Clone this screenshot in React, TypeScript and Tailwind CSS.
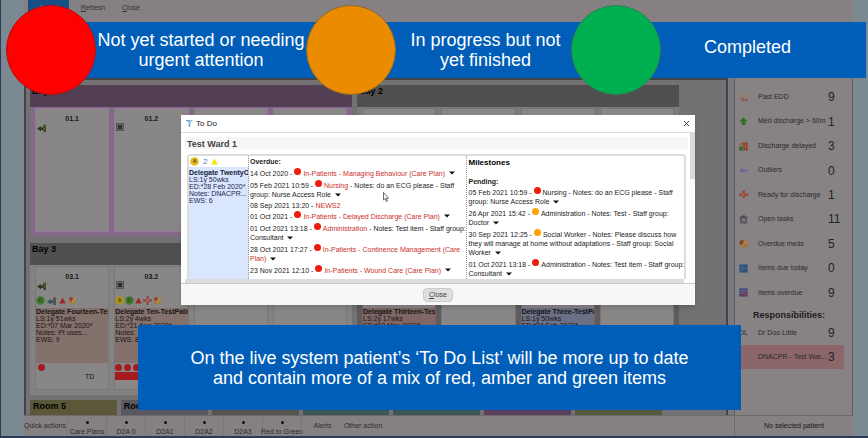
import type { ReactNode } from "react";

type Item = {
  date: string;
  dot?: "red" | "amber";
  link?: string;
  first?: string;
  rest?: string[];
  linkRest?: string;
  menu?: boolean;
};

const overdue: Item[] = [
  { date: "14 Oct 2020", dot: "red", link: "In-Patients - Managing Behaviour (Care Plan)", menu: true },
  { date: "05 Feb 2021 10:59", dot: "red", link: "Nursing", first: " - Notes: do an ECG please - Staff", rest: ["group: Nurse Access Role"], menu: true },
  { date: "08 Sep 2021 13:20", link: "NEWS2" },
  { date: "01 Oct 2021", dot: "red", link: "In-Patients - Delayed Discharge (Care Plan)", menu: true },
  { date: "01 Oct 2021 13:18", dot: "red", link: "Administration", first: " - Notes: Test item - Staff group:", rest: ["Consultant"], menu: true },
  { date: "28 Oct 2021 17:27", dot: "red", link: "In-Patients - Continence Management (Care", linkRest: "Plan)", menu: true },
  { date: "23 Nov 2021 12:10", dot: "red", link: "In-Patients - Wound Care (Care Plan)", menu: true },
];

const pending: Item[] = [
  { date: "05 Feb 2021 10:59", dot: "red", first: "Nursing - Notes: do an ECG please - Staff", rest: ["group: Nurse Access Role"], menu: true },
  { date: "26 Apr 2021 15:42", dot: "amber", first: "Administration - Notes: Test - Staff group:", rest: ["Doctor"], menu: true },
  { date: "30 Sep 2021 12:25", dot: "amber", first: "Social Worker - Notes: Please discuss how", rest: ["they will manage at home without adaptations - Staff group: Social", "Worker"], menu: true },
  { date: "01 Oct 2021 13:18", dot: "red", first: "Administration - Notes: Test item - Staff group:", rest: ["Consultant"], menu: true },
];

function Arrow() {
  return (
    <button aria-label="Item actions" className="ml-1 inline-block align-middle">
      <svg className="block h-1 w-[6px]" viewBox="0 0 6 4"><path d="M0 0.5h6L3 3.6z" fill="#111" /></svg>
    </button>
  );
}

function TodoItem({ item }: { item: Item }) {
  const tail = item.linkRest ? [item.linkRest] : item.rest ?? [];
  return (
    <li className="whitespace-nowrap">
      <div className={`flex items-center whitespace-pre ${item.dot ? "h-3" : "h-[10px]"}`}>
        <span>{item.date} - </span>
        {item.dot && (
          <span className={`mr-[2px] mb-[3px] size-[7px] shrink-0 rounded-full ${item.dot === "red" ? "bg-[#ee1c0c]" : "bg-[#fba504]"}`} />
        )}
        {item.link && <a href="#item" className="text-[#c9302c]">{item.link}</a>}
        {item.first && <span>{item.first}</span>}
        {item.menu && tail.length === 0 && <Arrow />}
      </div>
      {tail.map((t, i) => (
        <div key={t} className={`h-[9px] leading-[8px] ${item.linkRest ? "text-[#c9302c]" : ""}`}>
          {t}
          {item.menu && i === tail.length - 1 && <Arrow />}
        </div>
      ))}
    </li>
  );
}

function Person({ x = "#263d1c" }: { x?: string }) {
  return (
    <svg className="size-[10px]" viewBox="0 0 10 10">
      <path d="M0 5.5 4 3v1.5h2V2h3v7H7L6 7H4v1.5z" fill={x} />
      <circle cx="8" cy="2.5" r="1.5" fill="#52682e" />
      <path d="M6.5 4.5h2v3h-2z" fill="#6b5a35" />
    </svg>
  );
}

function Chip() {
  return (
    <svg className="size-2" viewBox="0 0 8 8">
      <rect x="0.5" y="0.5" width="7" height="7" fill="#666" stroke="#555" />
      <rect x="2" y="2" width="4" height="4" fill="#2f2f2f" />
    </svg>
  );
}

function Ring({ color, letter }: { color: string; letter: string }) {
  return (
    <svg className="size-[9px]" viewBox="0 0 9 9">
      <circle cx="4.5" cy="4.5" r="4.3" fill={color} />
      <text x="4.5" y="6.3" textAnchor="middle" fontSize="5" fontWeight="bold" fill="#3b3a12">{letter}</text>
    </svg>
  );
}

const Triangle = ({ color }: { color: string }) => (
  <svg className="size-[7px]" viewBox="0 0 7 7"><path d="M3.5 0.5 6.8 6.5H0.2z" fill={color} /></svg>
);

const Meds = () => (
  <svg className="size-[9px]" viewBox="0 0 9 9">
    <circle cx="4.5" cy="5" r="3.4" fill="#a8773f" />
    <circle cx="3" cy="3" r="2" fill="#8f4a2c" />
    <path d="M4.5 4.5 8 2M4 7l2-2" stroke="#c9a258" strokeWidth="1" />
  </svg>
);

const Cross = () => (
  <svg className="size-[9px]" viewBox="0 0 9 9">
    <path d="M3.5 0h2v3.5H9v2H5.5V9h-2V5.5H0v-2h3.5z" fill="#963c36" />
    <path d="M4.5 3v3M3 4.5h3" stroke="#b98a70" strokeWidth="0.6" />
  </svg>
);

type CardProps = { title: string; icon?: ReactNode; extra?: ReactNode; children?: ReactNode; tone?: string };

function Card({ title, icon, extra, children, tone = "border-[#777]" }: CardProps) {
  return (
    <article className={`flex min-w-0 flex-col overflow-hidden border bg-[#898688] text-[#161616] ${tone}`}>
      <h3 className="pt-[6px] text-center text-[7px] leading-[8px] font-bold">{title}</h3>
      <div className="flex h-3 items-start pl-px">{icon}</div>
      {extra}
      {children}
    </article>
  );
}

function Bay({ name, head, body, children }: { name: string; head: string; body: string; children: ReactNode }) {
  return (
    <section className={`flex h-[152px] flex-col ${body}`}>
      <h2 className={`h-[22px] shrink-0 pl-[2px] text-[9px] leading-[12px] font-bold text-black ${head}`}>{name}</h2>
      <div className="grid flex-1 grid-cols-4 gap-[5px] px-[5px] pt-px pb-[5px]">{children}</div>
    </section>
  );
}

function Patient({ name, lines, tone }: { name: string; lines: string[]; tone: string }) {
  return (
    <div className={`h-[55px] shrink-0 overflow-hidden whitespace-nowrap text-[7px] leading-[7px] ${tone}`}>
      <p className="font-bold">{name}</p>
      {lines.map((l) => <p key={l}>{l}</p>)}
    </div>
  );
}

const stats: { label: string; value: number; icon: ReactNode }[] = [
  { label: "Past EDD", value: 9, icon: <><circle cx="3" cy="3" r="2.3" fill="none" stroke="#a67a3f" strokeWidth="1" /><path d="M3 5.5 5 9M6 8h4" fill="none" stroke="#9c3a33" strokeWidth="1.3" /></> },
  { label: "Med discharge > 60m", value: 1, icon: <path d="M5 0.5 9.5 5H7v4H3V5H0.500z" fill="#2f6f22" /> },
  { label: "Discharge delayed", value: 3, icon: <><path d="M4 0.500h5.500v9H6z" fill="#95392b" /><circle cx="2.500" cy="2.500" r="1.500" fill="#8b6330" /><path d="M0 9.500V5h5v4.500z" fill="#3b6a30" /><path d="M7 2v5" stroke="#b07b3b" /></> },
  { label: "Outliers", value: 0, icon: <path d="M0.500 5 4 2v2h5.500v2H4v2z" fill="#65649a" /> },
  { label: "Ready for discharge", value: 1, icon: <><path d="M4 0.500h2.500V4H10v2.500H6.500V9H4V6.500H0V4h4z" fill="#984230" /><path d="M5.200 3.500v3.500M3.500 5.200h3.500" stroke="#b98655" strokeWidth="0.700" /></> },
  { label: "Open tasks", value: 11, icon: <><path d="M1 2.500h8v7H1z" fill="#5c5960" /><path d="M3 0.500h4v2H3zM0.500 2h9v1h-9z" fill="#46434a" /><path d="M3 4.500h4M3 6.500h4" stroke="#8d898f" /></> },
  { label: "Overdue meds", value: 5, icon: <><circle cx="5.500" cy="5.500" r="4" fill="#a5742e" /><circle cx="3" cy="4" r="2.500" fill="#7d3f25" /><path d="M4 5 8.500 3M3 8l3-2" stroke="#c39a4d" /></> },
  { label: "Items due today", value: 0, icon: <><path d="M0.500 0.500h9v9h-9z" fill="#29527a" /><path d="M2 3h6M2 5h6M2 7h3" stroke="#52748f" strokeWidth="0.800" /></> },
  { label: "Items overdue", value: 9, icon: <><path d="M0.500 0.500h9v9h-9z" fill="#3b4474" /><path d="M2 3h6M2 5.500h3" stroke="#8a8fae" strokeWidth="0.800" /><path d="M4.500 4.500h4v4h-4z" fill="#933a52" /></> },
];

const rooms = [
  { name: "Room 5", tone: "bg-[#5a5838]" },
  { name: "Room 6", tone: "bg-[#5a5860]" },
  { name: "Room 7", tone: "bg-[#575450]" },
  { name: "Room 8", tone: "bg-[#3c5558]" },
  { name: "Room 9", tone: "bg-[#3c5558]" },
  { name: "Room 10", tone: "bg-[#5c3f5c]" },
  { name: "Room 11", tone: "bg-[#55583c]" },
];

const actions = ["Care Plans", "D2A 0", "D2A1", "D2A2", "D2A3", "Red to Green"];

function Board() {
  return (
    <div className="min-w-0 flex-1 overflow-hidden border-x-2 border-t-2 border-[#454345] bg-[#747174] pt-[5px] pl-1">
      <div className="grid grid-cols-2 gap-x-[5px] gap-y-[6px] pr-[47px]">
        <Bay name="Bay 1" head="bg-[#523f54]" body="bg-[#826a86]">
          <Card tone="border-[#94769a]" title="01.1" icon={<Person />} />
          <Card tone="border-[#94769a]" title="01.2" icon={<Chip />} />
          <Card tone="border-[#94769a]" title="01.3" />
          <Card tone="border-[#94769a]" title="01.4" />
        </Bay>
        <Bay name="Bay 2" head="bg-[#505050]" body="bg-[#7c7a7c]">
          <Card title="02.1" /><Card title="02.2" /><Card title="02.3" /><Card title="02.4" />
        </Bay>
        <Bay name="Bay 3" head="bg-[#505050]" body="bg-[#858284]">
          <Card
            title="03.1"
            icon={<Person />}
            extra={<div className="flex h-[15px] shrink-0 items-center gap-[2px]"><Ring color="#3d7a2c" letter="G" /><Person x="#31505c" /><Triangle color="#a02823" /><Meds /></div>}
          >
            <Patient name="Delegate Fourteen-Test" lines={["LS:1y 51wks", "ED:*07 Mar 2020*", "Notes: Pt uses...", "EWS: 9"]} tone="bg-[#85716c]" />
            <span className="mt-px ml-[2px] size-[7px] shrink-0 rounded-full bg-[#a31b1f]" />
            <p className="pt-[2px] pr-[14px] text-right text-[7px] leading-[8px]">TD</p>
          </Card>
          <Card
            title="03.2"
            icon={<Chip />}
            extra={<div className="flex h-[15px] shrink-0 items-center gap-px"><Ring color="#a9921d" letter="A" /><Ring color="#3d7a2c" letter="G" /><Triangle color="#a02823" /><Cross /><Meds /></div>}
          >
            <Patient name="Delegate Ten-TestPatie" lines={["LS:2y 4wks", "ED:*21 Aug 2020*", "Notes: ...", "EWS: 8"]} tone="bg-[#85716c]" />
            <div className="mt-px flex shrink-0 gap-[2px]">
              {[0, 1, 2, 3].map((n) => <span key={n} className="size-[7px] rounded-full bg-[#a31b1f]" />)}
            </div>
            <div className="mt-px h-2 shrink-0 bg-[#a31b1f]" />
          </Card>
          <Card title="03.3" /><Card title="03.4" />
        </Bay>
        <Bay name="Bay 4" head="bg-[#505050]" body="bg-[#5e5c5e]">
          <Card title="04.1" tone="border-[#80615f]" extra={<div className="h-[15px] shrink-0" />}>
            <Patient name="Delegate Thirteen-Test" lines={["LS:2y 17wks", "ED:*02 May 2020*"]} tone="bg-[#806766]" />
          </Card>
          <Card title="04.2" />
          <Card title="04.3" tone="border-[#80615f]" extra={<div className="h-[15px] shrink-0" />}>
            <Patient name="Delegate Three-TestPa" lines={["LS:1y 50wks", "ED:*24 Feb 2020*"]} tone="bg-[#6b7085]" />
          </Card>
          <Card title="04.4" />
        </Bay>
      </div>
      <div className="mt-[5px] grid grid-cols-7 gap-1 pr-16">
        {rooms.map((r) => (
          <h2 key={r.name} className={`h-4 pl-[3px] text-[9px] leading-[12px] font-bold text-black ${r.tone}`}>{r.name}</h2>
        ))}
      </div>
    </div>
  );
}

function Sidebar() {
  return (
    <aside className="w-[119px] shrink-0 border-x border-[#5e5c5e] bg-[#878384] pt-[7px] text-[7px] text-[#2b292b]">
      <ul className="grid h-[220px] auto-rows-fr">
        {stats.map((s) => (
          <li key={s.label} className="flex">
            <button className="flex flex-1 items-center pl-1 text-left">
              <svg className="size-[9px]" viewBox="0 0 10 10">{s.icon}</svg>
              <span className="w-20 pl-[10px] whitespace-nowrap">{s.label}</span>
              <span className="text-[12px] text-[#222]">{s.value}</span>
            </button>
          </li>
        ))}
      </ul>
      <h2 className="pt-1 pl-[18px] text-[9px] leading-[12px] font-bold text-[#1d1b1d]">Responsibilities:</h2>
      <div className="flex h-6 items-center pl-1">
        <span className="w-[19px]">DL</span>
        <span className="w-[70px] whitespace-nowrap">Dr Doo Little</span>
        <span className="text-[12px] text-[#222]">9</span>
      </div>
      <div className="mr-2 ml-[5px] flex h-6 items-center bg-[#8c6669] pl-[18px]">
        <span className="w-[70px] whitespace-nowrap">DNACPR - Test War...</span>
        <span className="text-[12px] text-[#222]">3</span>
      </div>
    </aside>
  );
}

function Dialog() {
  return (
    <div role="dialog" aria-label="To Do" className="absolute top-[115px] right-[173px] left-[180px] flex h-[190px] flex-col bg-white text-[7px] leading-[9px] text-[#222] shadow-md">
      <header className="flex h-[18px] shrink-0 items-center border-b border-[#ddd] pr-[5px] pl-1">
        <svg className="size-[9px]" viewBox="0 0 9 9"><path d="M1 1h7L5.500 4v2L3.500 8.500V4z" fill="#9cc7ea" /><path d="M1 1.500h4M4.500 5v3" stroke="#4c93cf" strokeWidth="0.800" /></svg>
        <h1 className="flex-1 pl-[2px] text-[8px]">To Do</h1>
        <button aria-label="Close dialog">
          <svg className="size-[7px]" viewBox="0 0 7 7"><path d="m1 1 5 5M6 1 1 6" stroke="#333" strokeWidth="0.900" /></svg>
        </button>
      </header>
      <div className="flex min-h-0 flex-1 pl-1">
        <div className="flex min-w-0 flex-1 flex-col overflow-hidden pt-1">
          <h2 className="mb-[5px] h-3 shrink-0 bg-[#f6f6f6] pl-[2px] text-[9px] leading-[14px] font-bold text-[#444]">Test Ward 1</h2>
          <div className="mx-[2px] flex min-h-0 flex-1 rounded-t-sm border-x-2 border-t-2 border-[#dcdcdc]">
            <section className="w-[60px] shrink-0 overflow-hidden border-r border-dotted border-[#999] bg-[#dae5fe] whitespace-nowrap text-[#1d2a4c]">
              <div className="flex h-[11px] items-center gap-1 bg-white pl-px">
                <Ring color="#e6bd20" letter="A" />
                <span className="text-[8px] text-[#5577cc]">2</span>
                <Triangle color="#f6e800" />
              </div>
              <div className="pt-[2px] leading-[7px]">
                <p className="font-bold text-[#111b38]">Delegate TwentyO</p>
                <p>LS:1y 50wks</p>
                <p>ED:*28 Feb 2020*</p>
                <p>Notes: DNACPR...</p>
                <p>EWS: 6</p>
              </div>
            </section>
            <section className="min-w-0 flex-1 overflow-hidden pt-px pl-px">
              <h3 className="h-[10px] font-bold">Overdue:</h3>
              <ul>{overdue.map((i) => <TodoItem key={i.date} item={i} />)}</ul>
            </section>
            <section className="min-w-0 flex-1 overflow-hidden border-l border-dotted border-[#999] pt-[2px] pl-[2px]">
              <h3 className="text-[8px] font-bold text-black">Milestones</h3>
              <h4 className="pt-[10px] font-bold">Pending:</h4>
              <ul>{pending.map((i) => <TodoItem key={i.date} item={i} />)}</ul>
            </section>
          </div>
          <div className="mr-1 h-1 shrink-0 bg-[#dcdddf]" />
        </div>
        <div className="ml-[2px] w-[5px] shrink-0 bg-[#fafafa]"><div className="h-[46px] bg-[#d9d9d9]" /></div>
      </div>
      <footer className="flex h-[22px] shrink-0 items-center justify-center border-t border-[#c9c9cd] bg-[#f7f7f7]">
        <button className="h-[14px] w-[30px] rounded-sm border border-[#cacaca] bg-[#dedede] text-[#444]"><u>C</u>lose</button>
      </footer>
    </div>
  );
}

export default function App() {
  return (
    <div className="relative flex h-screen flex-col overflow-hidden border-b-2 border-l border-[#2c3a58] bg-[#7b8993] pr-[15px] pl-[23px] font-['Liberation_Sans',Arial,sans-serif]">
      <nav className="flex h-[78px] shrink-0 items-start bg-[#858182] pl-1 text-[7px] leading-[15px] text-[#333]">
        <button className="w-[41px] rounded-b-sm bg-[#154f86] text-[#4d80ad]">Select</button>
        <button className="w-[48px]"><u>R</u>efresh</button>
        <button className="w-[28px]"><u>C</u>lose</button>
      </nav>
      <main className="flex min-h-0 flex-1">
        <Board />
        <div className="w-[6px] shrink-0 bg-[#7b7a80]" />
        <Sidebar />
      </main>
      <footer className="flex h-[21px] shrink-0 items-stretch border-t border-[#6c6a6b] bg-[#858183] text-[7px] leading-[8px] text-[#2c2a2c]">
        <span className="w-[43px] self-center whitespace-nowrap">Quick actions</span>
        {actions.map((a) => (
          <button key={a} className="flex w-[39px] shrink-0 flex-col items-center justify-between border-l border-[#7b7779] pt-[5px] whitespace-nowrap">
            <span className="size-[3px] rounded-full bg-[#111]" />
            <span>{a}</span>
          </button>
        ))}
        <button className="w-[42px] border-l border-[#7b7779]">Alerts</button>
        <button className="w-[40px] whitespace-nowrap">Other action</button>
        <span className="ml-auto flex w-[119px] items-center justify-center border-l border-[#6c6a6b] text-[#181618]">No selected patient</span>
      </footer>

      <Dialog />

      <div className="absolute top-[5px] right-[2px] left-[5px] flex h-[90px] items-center text-center text-[18px] leading-5 text-white">
        <div className="absolute inset-x-0 top-[17px] left-[45px] h-14 bg-[#005eb8]" />
        <span className="relative size-[90px] shrink-0 rounded-full border border-[#b01010] bg-[#ff0000]" />
        <p className="relative w-[210px] shrink-0">Not yet started or needing<br />urgent attention</p>
        <span className="relative size-[90px] shrink-0 rounded-full border border-[#8f6a2a] bg-[#ea8b00]" />
        <p className="relative w-[175px] shrink-0 pl-1">In progress but not<br />yet finished</p>
        <span className="relative size-[90px] shrink-0 rounded-full border border-[#2f7d50] bg-[#00b050]" />
        <p className="relative flex-1 pr-8 pb-[6px]">Completed</p>
      </div>

      <p className="absolute right-[127px] bottom-[26px] left-[137px] flex h-[85px] items-center justify-center bg-[#005eb8] text-center text-[18px] leading-5 text-white">
        <span>On the live system patient’s ‘To Do List’ will be more up to date<br />and contain more of a mix of red, amber and green items</span>
      </p>

      <svg className="absolute top-[192px] left-[382px] h-[10px] w-[6px]" viewBox="0 0 6 10">
        <path d="M0.500 0.500v7.500l1.700-1.500L3.500 9.500l1-.5-1.200-2.800h2.200z" fill="#fff" stroke="#333" strokeWidth="0.700" />
      </svg>
    </div>
  );
}
